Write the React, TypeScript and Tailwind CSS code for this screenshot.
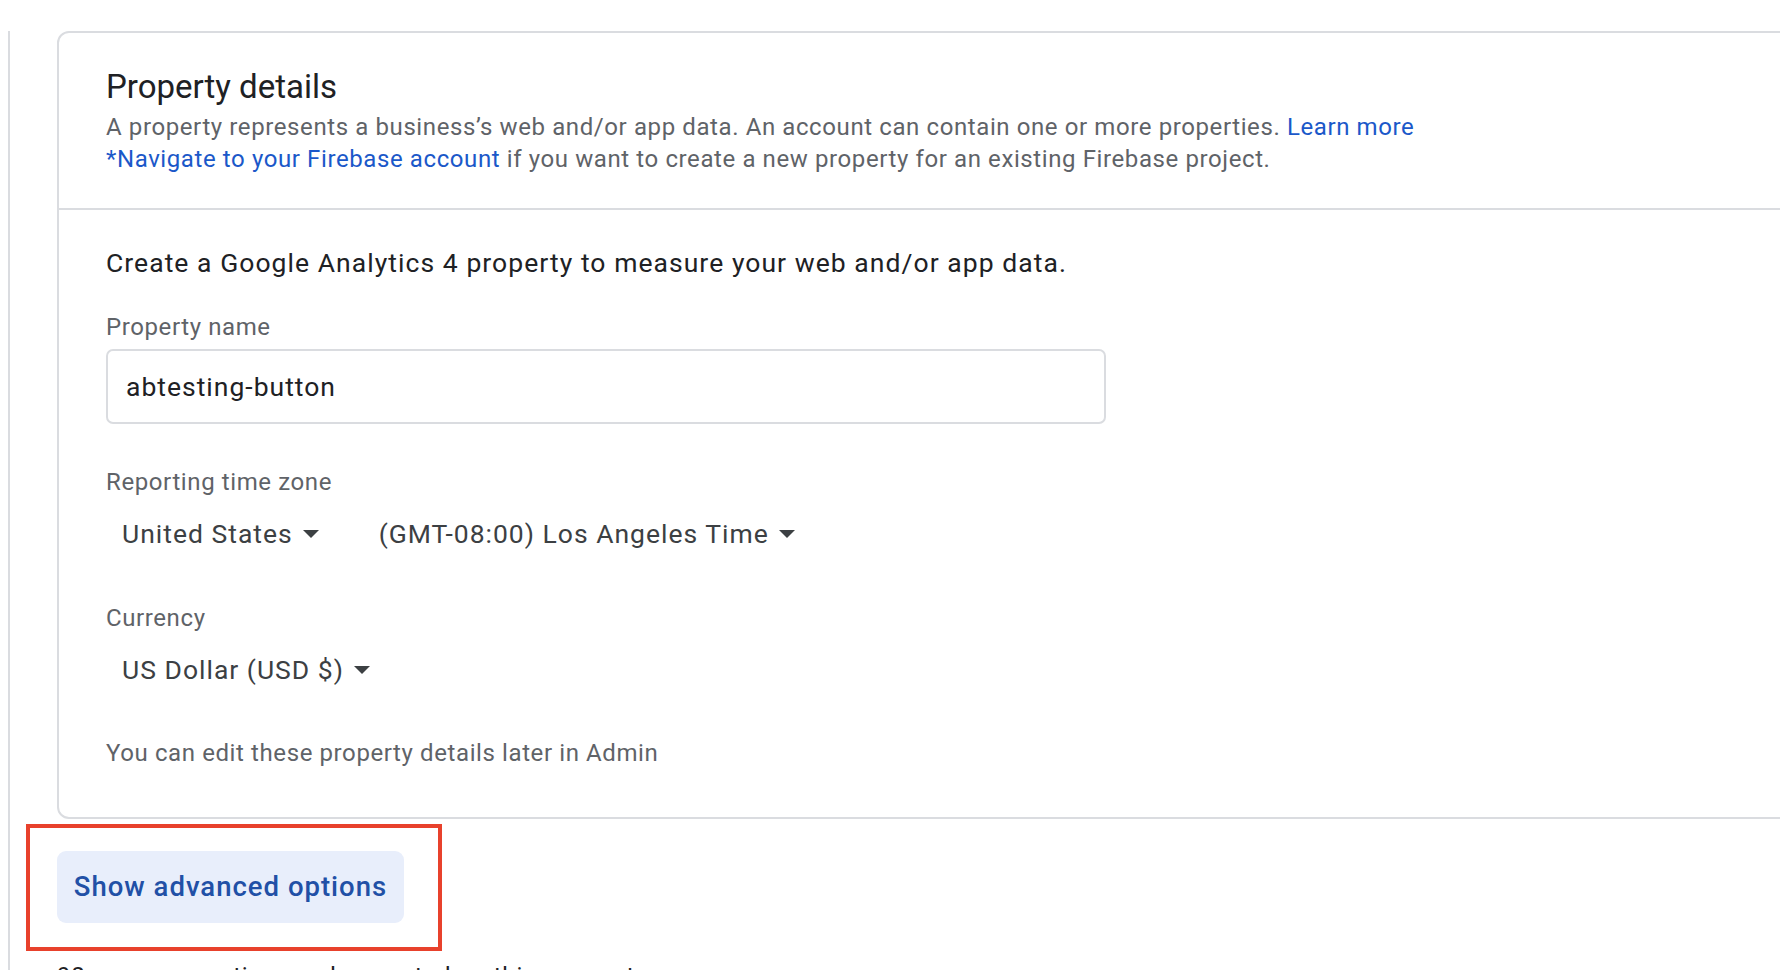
import React from 'react';

const ArrowDrop: React.FC = () => (
  <svg width="16" height="8" viewBox="0 0 10 5" className="shrink-0">
    <path d="M0 0l5 5 5-5z" fill="#3c4043" />
  </svg>
);

const Dropdown: React.FC<{ label: string; className?: string }> = ({ label, className }) => (
  <div className={`flex items-center gap-[10px] h-[48px] ${className ?? ''}`}>
    <span className="text-[26.5px] leading-[48px] text-[#3c4043] tracking-[1px]">{label}</span>
    <ArrowDrop />
  </div>
);

const App: React.FC = () => {
  return (
    <div className="relative w-full h-[970px] overflow-hidden bg-white font-['Roboto','Liberation_Sans',sans-serif]">
      <div className="ml-[8px] h-full border-l-2 border-[#dadce0] pl-[47px]">
        {/* Property details card */}
        <div className="mt-[31px] w-[1800px] rounded-[12px] border-2 border-[#dadce0]">
          <div className="pl-[47px] pt-[34px] pb-[33px] border-b-2 border-[#dadce0]">
            <h2 className="text-[33px] leading-[40px] text-[#202124]">Property details</h2>
            <p className="mt-[4px] text-[24px] leading-[32px] text-[#5f6368] tracking-[0.6px]">
              A property represents a business’s web and/or app data. An account can contain one or more properties.{' '}
              <a className="text-[#1b58c9]">Learn more</a>
            </p>
            <p className="text-[24px] leading-[32px] text-[#5f6368] tracking-[0.6px]">
              <a className="text-[#1b58c9]">*Navigate to your Firebase account</a> if you want to create a new property for an existing Firebase project.
            </p>
          </div>

          <div className="pl-[47px] pt-[35px] pb-[48px]">
            <p className="text-[26.5px] leading-[36px] text-[#202124] tracking-[1.05px]">
              Create a Google Analytics 4 property to measure your web and/or app data.
            </p>

            <div className="mt-[30px] text-[24px] leading-[32px] text-[#5f6368] tracking-[0.6px]">Property name</div>
            <div className="mt-[6px] w-[1000px] h-[75px] rounded-[7px] border-2 border-[#dadce0] flex items-center pl-[18px]">
              <span className="text-[26.5px] text-[#202124] tracking-[1px]">abtesting-button</span>
            </div>

            <div className="mt-[42px] text-[24px] leading-[32px] text-[#5f6368] tracking-[0.6px]">Reporting time zone</div>
            <div className="mt-[12px] flex items-center">
              <Dropdown label="United States" className="pl-[16px]" />
              <Dropdown label="(GMT-08:00) Los Angeles Time" className="ml-[60px]" />
            </div>

            <div className="mt-[44px] text-[24px] leading-[32px] text-[#5f6368] tracking-[0.6px]">Currency</div>
            <div className="mt-[12px] flex items-center">
              <Dropdown label="US Dollar (USD $)" className="pl-[16px]" />
            </div>

            <p className="mt-[43px] text-[24px] leading-[32px] text-[#5f6368] tracking-[0.6px]">
              You can edit these property details later in Admin
            </p>
          </div>
        </div>

        <button className="mt-[32px] h-[72px] w-[347px] rounded-[9px] bg-[#e8eefb] flex items-center justify-center">
          <span className="text-[27.5px] font-medium text-[#2150a6] tracking-[1px]">Show advanced options</span>
        </button>

        <p className="mt-[37px] text-[24px] leading-[32px] text-[#202124] tracking-[0.85px]">
          98 more properties can be created on this account.
        </p>
      </div>

      {/* annotation box around the button */}
      <div className="absolute left-[26px] top-[824px] w-[416px] h-[127px] border-4 border-[#e8412c] pointer-events-none" />
    </div>
  );
};

export default App;
